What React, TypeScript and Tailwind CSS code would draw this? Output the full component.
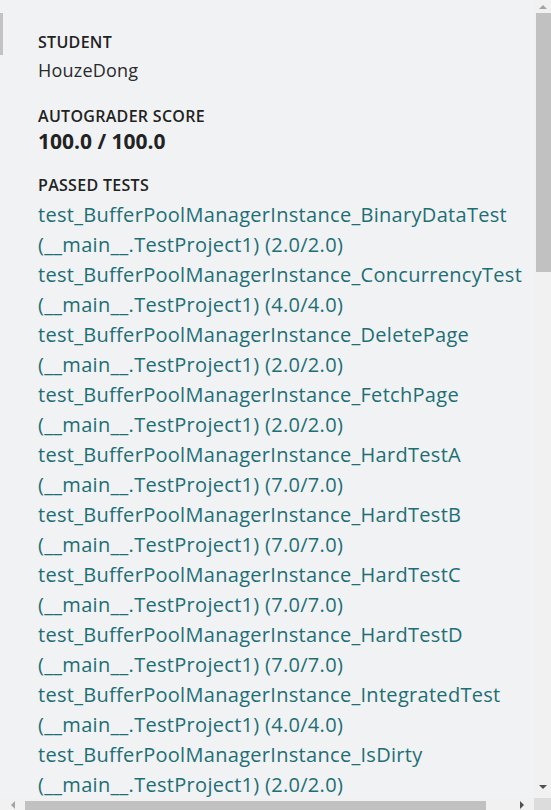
import React from 'react';

const tests: [string, string][] = [
  ['BinaryDataTest', '2.0/2.0'],
  ['ConcurrencyTest', '4.0/4.0'],
  ['DeletePage', '2.0/2.0'],
  ['FetchPage', '2.0/2.0'],
  ['HardTestA', '7.0/7.0'],
  ['HardTestB', '7.0/7.0'],
  ['HardTestC', '7.0/7.0'],
  ['HardTestD', '7.0/7.0'],
  ['IntegratedTest', '4.0/4.0'],
  ['IsDirty', '2.0/2.0'],
];

const App: React.FC = () => {
  return (
    <div className="w-[551px] h-[810px] flex flex-col bg-[#f1f2f4] overflow-hidden font-['Open_Sans',sans-serif]">
      <div className="flex flex-1 min-h-0">
        {/* left edge strip */}
        <div className="w-[3px] shrink-0">
          <div className="mt-[13px] h-[42px] bg-[#c3c3c3]" />
        </div>

        {/* content */}
        <div className="flex-1 min-w-0 overflow-hidden pl-[35px] pt-[32px]">
          <p className="text-[16px] leading-[20px] font-semibold tracking-[0.3px] text-[#222] uppercase">Student</p>
          <p className="mt-[6px] text-[18px] leading-[24px] tracking-[0.2px] text-[#2a2a2a]">HouzeDong</p>

          <p className="mt-[24px] text-[16px] leading-[20px] font-semibold tracking-[0.3px] text-[#222] uppercase">Autograder Score</p>
          <p className="mt-[2px] text-[21px] leading-[26px] font-bold text-[#222]">100.0 / 100.0</p>

          <p className="mt-[21px] text-[16px] leading-[20px] font-semibold tracking-[0.3px] text-[#222] uppercase">Passed Tests</p>
          <ul className="mt-[5px] text-[20px] leading-[30px] tracking-[0.3px] text-[#1e6e75]">
            {tests.map(([name, score]) => (
              <li key={name}>
                <span className="block whitespace-nowrap">test_BufferPoolManagerInstance_{name}</span>
                <span className="block whitespace-nowrap">(__main__.TestProject1) ({score})</span>
              </li>
            ))}
          </ul>
        </div>

        {/* vertical scrollbar */}
        <div className="w-[17px] shrink-0 flex flex-col bg-[#f1f1f1]">
          <div className="h-[13px] flex items-center justify-center">
            <div className="w-0 h-0 border-l-[4px] border-r-[4px] border-b-[4px] border-l-transparent border-r-transparent border-b-[#a3a3a3]" />
          </div>
          <div className="ml-[2px] h-[259px] bg-[#c1c1c1]" />
          <div className="flex-1" />
          <div className="h-[17px] flex items-start justify-center pt-[4px]">
            <div className="w-0 h-0 border-l-[4px] border-r-[4px] border-t-[4px] border-l-transparent border-r-transparent border-t-[#505050]" />
          </div>
        </div>
      </div>

      {/* horizontal scrollbar */}
      <div className="h-[12px] shrink-0 flex bg-[#f1f1f1]">
        <div className="w-[25px] flex items-start justify-center pt-[3px]">
          <div className="w-0 h-0 border-t-[4px] border-b-[4px] border-r-[4px] border-t-transparent border-b-transparent border-r-[#a3a3a3]" />
        </div>
        <div className="w-[461px] mt-[3px] bg-[#c1c1c1]" />
        <div className="flex-1 flex items-start justify-end pr-[10px] pt-[3px]">
          <div className="w-0 h-0 border-t-[4px] border-b-[4px] border-l-[4px] border-t-transparent border-b-transparent border-l-[#505050]" />
        </div>
        <div className="w-[17px] bg-[#dcdcdc]" />
      </div>
    </div>
  );
};

export default App;
